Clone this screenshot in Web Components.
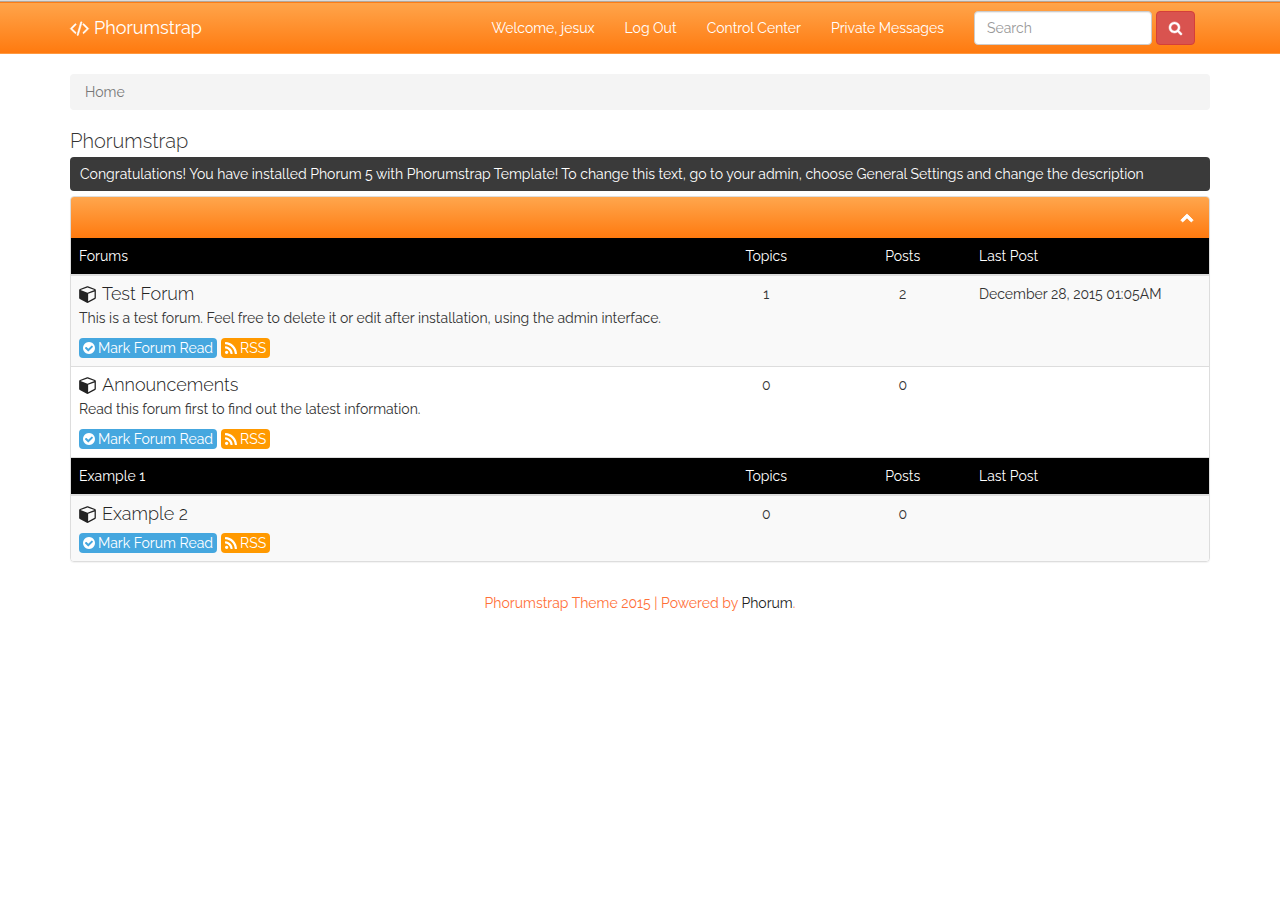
<!DOCTYPE html>
<html lang="en">
<head>
<meta charset="utf-8">
<title>Phorumstrap</title>
<style>
    body {
        margin: 0;
        background: #fff;
        color: #333;
        font-family: Raleway, Lato, 'Open Sans', sans-serif;
        font-size: 14px;
        font-weight: 400;
        line-height: 20px;
    }

    main {
        box-sizing: border-box;
        max-width: 1170px;
        margin: 0 auto;
        padding: 20px 15px 0;
    }

    h1 {
        margin: 20px 0 5px;
        font-size: 20px;
        font-weight: 300;
        line-height: 22px;
    }
</style>
</head>
<body>
<ps-navbar>
    <ps-brand slot="brand">Phorumstrap</ps-brand>
    <ps-nav-link href="#profile">Welcome, jesux</ps-nav-link>
    <ps-nav-link href="#logout">Log Out</ps-nav-link>
    <ps-nav-link href="#control">Control Center</ps-nav-link>
    <ps-nav-link href="#pm">Private Messages</ps-nav-link>
    <ps-search slot="search"></ps-search>
</ps-navbar>
<main>
    <ps-breadcrumb>Home</ps-breadcrumb>
    <h1>Phorumstrap</h1>
    <ps-notice>Congratulations! You have installed Phorum 5 with Phorumstrap Template! To change this text, go to your admin, choose General Settings and change the description</ps-notice>
    <ps-panel>
        <ps-forum-table></ps-forum-table>
    </ps-panel>
</main>
<ps-footer>Phorumstrap Theme 2015 | Powered by</ps-footer>

<script>
const icons = {
  code: 'M553 1399l-50 50q-10 10-23 10t-23-10l-466-466q-10-10-10-23t10-23l466-466q10-10 23-10t23 10l50 50q10 10 10 23t-10 23l-393 393 393 393q10 10 10 23t-10 23zm591-1067l-373 1291q-4 13-15.5 19.5t-23.5 2.5l-62-17q-13-4-19.5-15.5t-2.5-24.5l373-1291q4-13 15.5-19.5t23.5-2.5l62 17q13 4 19.5 15.5t2.5 24.5zm657 651l-466 466q-10 10-23 10t-23-10l-50-50q-10-10-10-23t10-23l393-393-393-393q-10-10-10-23t10-23l50-50q10-10 23-10t23 10l466 466q10 10 10 23t-10 23z',
  search: 'M1216 832q0-185-131.5-316.5t-316.5-131.5-316.5 131.5-131.5 316.5 131.5 316.5 316.5 131.5 316.5-131.5 131.5-316.5zm512 832q0 52-38 90t-90 38q-54 0-90-38l-343-342q-179 124-399 124-143 0-273.5-55.5t-225-150-150-225-55.5-273.5 55.5-273.5 150-225 225-150 273.5-55.5 273.5 55.5 225 150 150 225 55.5 273.5q0 220-124 399l343 343q37 37 37 90z',
  up: 'M1683 1331l-166 165q-19 19-45 19t-45-19l-531-531-531 531q-19 19-45 19t-45-19l-166-165q-19-19-19-45.500t19-45.500l742-741q19-19 45-19t45 19l742 741q19 19 19 45.500t-19 45.500z',
  cube: 'M896 1629l640-349v-636l-640 233v752zm-64-865l698-254-698-254-698 254zm832-252v768q0 35-18 65t-49 47l-704 384q-28 16-61 16t-61-16l-704-384q-31-17-49-47t-18-65v-768q0-40 23-73t61-47l704-256q22-8 44-8t44 8l704 256q38 14 61 47t23 73z',
  check: 'M1412 734q0-28-18-46l-91-90q-19-19-45-19t-45 19l-408 407-226-226q-19-19-45-19t-45 19l-91 90q-18 18-18 46 0 27 18 45l362 362q19 19 45 19 27 0 46-19l543-543q18-18 18-45zm252 162q0 209-103 385.500t-279.500 279.500-385.500 103-385.500-103-279.500-279.500-103-385.500 103-385.500 279.500-279.500 385.500-103 385.500 103 279.500 279.500 103 385.500z',
  rss: 'M576 1344q0 80-56 136t-136 56-136-56-56-136 56-136 136-56 136 56 56 136zm512 123q2 28-17 48-18 21-47 21h-135q-25 0-43-16.500t-20-41.500q-22-229-184.500-391.500t-391.500-184.500q-25-2-41.500-20t-16.500-43v-135q0-29 21-47 17-17 43-17h5q160 13 306 80.500t259 181.500q114 113 181.500 259t80.500 306zm512 2q2 27-18 47-18 20-46 20h-143q-26 0-44.500-17.500t-19.500-42.500q-12-215-101-408.500t-231.500-336-336-231.500-408.500-102q-25-1-42.500-19.500t-17.500-43.500v-143q0-28 20-46 18-18 44-18h3q262 13 501.500 120t425.500 294q187 186 294 425.500t120 501.500z',
};

// viewBox of every icon, cropped to the glyph where it sits off centre
const boxes = {
  code: '-20 0 1832 1792',
  search: '64 128 1664 1664',
  up: '90 190 1612 1612',
  cube: '0 0 1664 1792',
  check: '128 128 1536 1536',
  rss: '192 128 1408 1408',
};

const sections = [
  {
    name: 'Forums',
    forums: [
      {
        name: 'Test Forum',
        text: 'This is a test forum. Feel free to delete it or edit after installation, using the admin interface.',
        topics: 1,
        posts: 2,
        last: 'December 28, 2015 01:05AM',
      },
      {
        name: 'Announcements',
        text: 'Read this forum first to find out the latest information.',
        topics: 0,
        posts: 0,
        last: '',
      },
    ],
  },
  {
    name: 'Example 1',
    forums: [{ name: 'Example 2', text: '', topics: 0, posts: 0, last: '' }],
  },
];

class BaseElement extends HTMLElement {
  constructor() {
    super();
    this.attachShadow({ mode: 'open' });
  }

  connectedCallback() {
    this.shadowRoot.innerHTML = this.render();
  }
}

class Icon extends BaseElement {
  render() {
    const name = this.getAttribute('name');
    return `
      <style>
        :host { display: inline-flex; flex: none; width: 12px; height: 12px; }
        svg { width: 100%; height: 100%; overflow: visible; fill: currentColor; stroke: currentColor; stroke-width: var(--icon-stroke, 0); }
      </style>
      <svg viewBox="${boxes[name]}" aria-hidden="true"><path d="${icons[name]}"/></svg>
    `;
  }
}

class Navbar extends BaseElement {
  render() {
    return `
      <style>
        :host {
          display: block;
          border-top: 1px solid #dcdcdc;
          border-bottom: 1px solid #ff9940;
          background: linear-gradient(#ffa64d, #ff7a0f);
          box-shadow: inset 0 1px #b5a696, inset 0 2px #fb7d18;
        }
        nav {
          box-sizing: border-box;
          display: flex;
          align-items: center;
          max-width: 1170px;
          min-height: 52px;
          margin: 0 auto;
          padding: 2px 15px 0;
        }
        .links { display: flex; margin-left: auto; }
        .search { padding: 0 15px; }
      </style>
      <nav>
        <slot name="brand"></slot>
        <div class="links"><slot></slot></div>
        <div class="search"><slot name="search"></slot></div>
      </nav>
    `;
  }
}

class Brand extends BaseElement {
  render() {
    return `
      <style>
        :host { display: block; color: #fff; font-size: 18px; }
        a { display: flex; align-items: center; gap: 5px; color: inherit; text-decoration: none; }
        ps-icon { width: 19px; height: 18px; --icon-stroke: 60; }
      </style>
      <a href="#home"><ps-icon name="code"></ps-icon><span><slot></slot></span></a>
    `;
  }
}

class NavLink extends BaseElement {
  render() {
    return `
      <style>
        :host { display: block; color: #fff; }
        a { display: block; padding: 0 15px; color: inherit; text-decoration: none; white-space: nowrap; }
      </style>
      <a href="${this.getAttribute('href')}"><slot></slot></a>
    `;
  }
}

class Search extends BaseElement {
  render() {
    return `
      <style>
        :host { display: block; }
        form { display: flex; gap: 4px; }
        input {
          box-sizing: border-box;
          width: 178px;
          height: 34px;
          padding: 6px 12px;
          border: 1px solid #ccc;
          border-radius: 4px;
          background: #fff;
          color: #555;
          font: inherit;
          box-shadow: inset 0 1px 1px rgba(0, 0, 0, .075);
        }
        input::placeholder { color: #999; opacity: 1; }
        button {
          display: flex;
          align-items: center;
          justify-content: center;
          width: 39px;
          height: 34px;
          padding: 0;
          border: 1px solid #d43f3a;
          border-radius: 4px;
          background: #d9534f;
          color: #fff;
        }
        ps-icon { width: 13px; height: 13px; --icon-stroke: 60; }
      </style>
      <form>
        <input type="text" placeholder="Search" aria-label="Search">
        <button type="button" aria-label="Run search"><ps-icon name="search"></ps-icon></button>
      </form>
    `;
  }
}

class Breadcrumb extends BaseElement {
  render() {
    return `
      <style>
        :host { display: block; padding: 8px 15px; border-radius: 4px; background: #f4f4f4; }
        a { color: #777; text-decoration: none; }
      </style>
      <a href="#home"><slot></slot></a>
    `;
  }
}

class Notice extends BaseElement {
  render() {
    return `
      <style>
        :host {
          display: block;
          margin-bottom: 5px;
          padding: 7px 10px;
          border-radius: 4px;
          background: #3a3a3a;
          color: #fff;
        }
      </style>
      <slot></slot>
    `;
  }
}

class Panel extends BaseElement {
  render() {
    return `
      <style>
        :host {
          display: block;
          overflow: hidden;
          border: 1px solid #ddd;
          border-radius: 4px;
          box-shadow: 0 1px 1px rgba(0, 0, 0, .05);
        }
        header {
          display: flex;
          align-items: center;
          justify-content: flex-end;
          min-height: 41px;
          padding: 0 16px;
          background: linear-gradient(#ffa64d, #ff7a0f);
        }
        button { display: flex; padding: 0; border: 0; background: none; color: #fff; }
        ps-icon { width: 12px; height: 12px; --icon-stroke: 120; }
      </style>
      <header><button type="button" aria-label="Collapse"><ps-icon name="up"></ps-icon></button></header>
      <slot></slot>
    `;
  }

  connectedCallback() {
    super.connectedCallback();
    this.shadowRoot.querySelector('button').addEventListener('click', () => {
      const table = this.querySelector('ps-forum-table');
      table.hidden = !table.hidden;
    });
  }
}

class Label extends BaseElement {
  render() {
    return `
      <style>
        :host { display: block; border-radius: 4px; background: #45a7df; color: #fff; }
        :host([kind='rss']) { background: #ff9900; }
        a { display: flex; align-items: center; gap: 3px; padding: 0 4px; color: inherit; text-decoration: none; }
      </style>
      <a href="#${this.getAttribute('kind')}"><ps-icon name="${this.getAttribute('kind')}"></ps-icon><span><slot></slot></span></a>
    `;
  }
}

class ForumTable extends BaseElement {
  renderForum(forum) {
    return `
      <tr>
        <td>
          <h2><a href="#forum"><ps-icon name="cube"></ps-icon><span>${forum.name}</span></a></h2>
          ${forum.text ? `<p>${forum.text}</p>` : ''}
          <div class="labels">
            <ps-label kind="check">Mark Forum Read</ps-label>
            <ps-label kind="rss">RSS</ps-label>
          </div>
        </td>
        <td class="count">${forum.topics}</td>
        <td class="count">${forum.posts}</td>
        <td>${forum.last}</td>
      </tr>
    `;
  }

  renderSection(section) {
    return `
      <tbody>
        <tr>
          <th scope="col">${section.name}</th>
          <th scope="col" class="count">Topics</th>
          <th scope="col" class="count">Posts</th>
          <th scope="col">Last Post</th>
        </tr>
        ${section.forums.map((f) => this.renderForum(f)).join('')}
      </tbody>
    `;
  }

  render() {
    return `
      <style>
        :host { display: block; }
        :host([hidden]) { display: none; }
        table { width: 100%; border-spacing: 0; table-layout: fixed; }
        th, td { padding: 8px; text-align: left; vertical-align: top; }
        th { border-bottom: 2px solid #ddd; background: #000; color: #fff; font-weight: 400; }
        td { border-bottom: 1px solid #ddd; }
        tr:nth-child(even) td { background: #f9f9f9; }
        tbody:last-child tr:last-child td { border-bottom: 0; }
        .count { text-align: center; }
        .number { width: 12%; }
        .last { width: 238px; }
        h2 { margin: 0; font-size: 18px; font-weight: 300; }
        h2 a { display: flex; align-items: center; gap: 6px; color: #222; text-decoration: none; }
        h2 ps-icon { width: 17px; height: 18px; }
        p { margin: 4px 0 0; }
        .labels { display: flex; gap: 4px; margin-top: 9px; }
        p + .labels { margin-top: 10px; }
      </style>
      <table>
        <colgroup><col><col class="number"><col class="number"><col class="last"></colgroup>
        ${sections.map((s) => this.renderSection(s)).join('')}
      </table>
    `;
  }
}

class Footer extends BaseElement {
  render() {
    return `
      <style>
        :host { display: block; padding: 31px 15px; color: #ff7038; text-align: center; }
        a { color: #222; text-decoration: none; }
      </style>
      <footer><slot></slot> <a href="#phorum">Phorum</a>.</footer>
    `;
  }
}

window.customElements.define('ps-icon', Icon);
window.customElements.define('ps-navbar', Navbar);
window.customElements.define('ps-brand', Brand);
window.customElements.define('ps-nav-link', NavLink);
window.customElements.define('ps-search', Search);
window.customElements.define('ps-breadcrumb', Breadcrumb);
window.customElements.define('ps-notice', Notice);
window.customElements.define('ps-panel', Panel);
window.customElements.define('ps-label', Label);
window.customElements.define('ps-forum-table', ForumTable);
window.customElements.define('ps-footer', Footer);
</script>
</body>
</html>
